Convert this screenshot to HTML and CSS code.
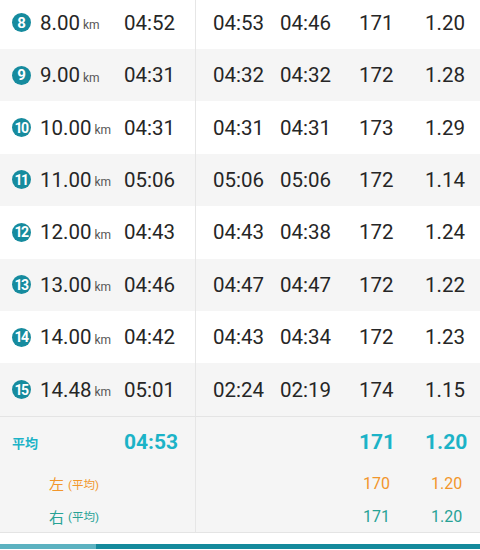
FILE: index.html
```html
<!DOCTYPE html>
<html>
<head>
  <meta charset="utf-8">
  <meta name="viewport" content="width=device-width, initial-scale=1">
  <title>ラップ</title>
  <link rel="stylesheet" href="styles.css">
</head>
<body>
  <div class="laps">
    <div class="row">
      <div class="dist"><span class="badge">8</span><span class="km">8.00</span><span class="unit">km</span></div>
      <div class="pace">04:52</div>
      <div class="col-a">04:53</div>
      <div class="col-b">04:46</div>
      <div class="col-c">171</div>
      <div class="col-d">1.20</div>
    </div>
    <div class="row">
      <div class="dist"><span class="badge">9</span><span class="km">9.00</span><span class="unit">km</span></div>
      <div class="pace">04:31</div>
      <div class="col-a">04:32</div>
      <div class="col-b">04:32</div>
      <div class="col-c">172</div>
      <div class="col-d">1.28</div>
    </div>
    <div class="row">
      <div class="dist"><span class="badge two">10</span><span class="km">10.00</span><span class="unit">km</span></div>
      <div class="pace">04:31</div>
      <div class="col-a">04:31</div>
      <div class="col-b">04:31</div>
      <div class="col-c">173</div>
      <div class="col-d">1.29</div>
    </div>
    <div class="row">
      <div class="dist"><span class="badge two">11</span><span class="km">11.00</span><span class="unit">km</span></div>
      <div class="pace">05:06</div>
      <div class="col-a">05:06</div>
      <div class="col-b">05:06</div>
      <div class="col-c">172</div>
      <div class="col-d">1.14</div>
    </div>
    <div class="row">
      <div class="dist"><span class="badge two">12</span><span class="km">12.00</span><span class="unit">km</span></div>
      <div class="pace">04:43</div>
      <div class="col-a">04:43</div>
      <div class="col-b">04:38</div>
      <div class="col-c">172</div>
      <div class="col-d">1.24</div>
    </div>
    <div class="row">
      <div class="dist"><span class="badge two">13</span><span class="km">13.00</span><span class="unit">km</span></div>
      <div class="pace">04:46</div>
      <div class="col-a">04:47</div>
      <div class="col-b">04:47</div>
      <div class="col-c">172</div>
      <div class="col-d">1.22</div>
    </div>
    <div class="row">
      <div class="dist"><span class="badge two">14</span><span class="km">14.00</span><span class="unit">km</span></div>
      <div class="pace">04:42</div>
      <div class="col-a">04:43</div>
      <div class="col-b">04:34</div>
      <div class="col-c">172</div>
      <div class="col-d">1.23</div>
    </div>
    <div class="row">
      <div class="dist"><span class="badge two">15</span><span class="km">14.48</span><span class="unit">km</span></div>
      <div class="pace">05:01</div>
      <div class="col-a">02:24</div>
      <div class="col-b">02:19</div>
      <div class="col-c">174</div>
      <div class="col-d">1.15</div>
    </div>
  </div>

  <div class="summary">
    <div class="sum-row avg">
      <div class="dist label">平均</div>
      <div class="pace">04:53</div>
      <div class="col-a"></div>
      <div class="col-b"></div>
      <div class="col-c">171</div>
      <div class="col-d">1.20</div>
    </div>
    <div class="sum-row side left">
      <div class="dist label"><span class="side-name">左</span> <span class="side-note">(平均)</span></div>
      <div class="pace"></div>
      <div class="col-a"></div>
      <div class="col-b"></div>
      <div class="col-c">170</div>
      <div class="col-d">1.20</div>
    </div>
    <div class="sum-row side right">
      <div class="dist label"><span class="side-name">右</span> <span class="side-note">(平均)</span></div>
      <div class="pace"></div>
      <div class="col-a"></div>
      <div class="col-b"></div>
      <div class="col-c">171</div>
      <div class="col-d">1.20</div>
    </div>
  </div>

  <div class="spacer"></div>
  <div class="tabbar"><div class="tab-active"></div></div>
</body>
</html>
```

FILE: styles.css
```css
* {
  margin: 0;
  padding: 0;
  box-sizing: border-box;
}

html, body {
  width: 480px;
  height: 550px;
  overflow: hidden;
  background: #fff;
}

body {
  font-family: Roboto, "Noto Sans CJK JP", sans-serif;
  color: #262626;
}

.laps {
  margin-top: -3.4px;
}

.row, .sum-row {
  display: grid;
  grid-template-columns: 118px 77px 85px 79px 66px 1fr;
  align-items: center;
}

.row {
  height: 52.4px;
  font-size: 20.5px;
}

.row:nth-child(even) {
  background: #f5f5f5;
}

.row > div, .sum-row > div {
  height: 100%;
  display: flex;
  align-items: center;
  white-space: nowrap;
}

.col-a {
  border-left: 1px solid #e6e6e6;
  padding-left: 17px;
}

.dist {
  padding-left: 12px;
}

.badge {
  width: 19px;
  height: 19px;
  border-radius: 50%;
  background: #168b9e;
  color: #fff;
  font-size: 15px;
  font-weight: 700;
  display: flex;
  align-items: center;
  justify-content: center;
  margin-right: 9px;
  flex-shrink: 0;
}

.badge.two {
  font-size: 14px;
  letter-spacing: -1.5px;
  padding-right: 1px;
}

.unit {
  font-size: 12px;
  color: #555;
  margin-left: 3px;
  padding-top: 5px;
}

.pace {
  padding-left: 6px;
}

/* summary */

.summary {
  background: #f5f5f5;
  border-top: 1px solid #e4e4e4;
  border-bottom: 1px solid #e4e4e4;
}

.avg {
  height: 50px;
  color: #1cb3c7;
  font-weight: 700;
  font-size: 21px;
}

.avg .label {
  font-size: 13px;
  padding-top: 1px;
}

.side {
  font-size: 16px;
}

.side.left {
  height: 34px;
  color: #f2962b;
}

.side.right {
  height: 31px;
  color: #27a295;
}

.side .label {
  padding-left: 49px;
}

.side-name {
  font-size: 15px;
}

.side-note {
  font-size: 11.5px;
  margin-left: 4px;
}

.side .col-c {
  padding-left: 4px;
}

.side .col-d {
  padding-left: 6px;
}

.spacer {
  height: 11px;
}

.tabbar {
  height: 5px;
  background: #148a9c;
}

.tab-active {
  width: 96px;
  height: 100%;
  background: #5cb2c1;
}
```
